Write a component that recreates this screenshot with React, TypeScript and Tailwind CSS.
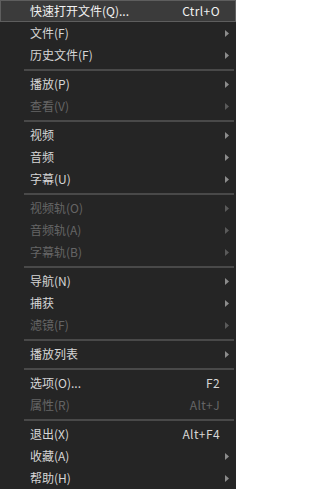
import * as React from "react";

type Item = {
  label: string;
  shortcut?: string;
  submenu?: boolean;
  disabled?: boolean;
  active?: boolean;
};

const groups: Item[][] = [
  [
    { label: "快速打开文件(Q)...", shortcut: "Ctrl+O", active: true },
    { label: "文件(F)", submenu: true },
    { label: "历史文件(F)", submenu: true },
  ],
  [
    { label: "播放(P)", submenu: true },
    { label: "查看(V)", submenu: true, disabled: true },
  ],
  [
    { label: "视频", submenu: true },
    { label: "音频", submenu: true },
    { label: "字幕(U)", submenu: true },
  ],
  [
    { label: "视频轨(O)", submenu: true, disabled: true },
    { label: "音频轨(A)", submenu: true, disabled: true },
    { label: "字幕轨(B)", submenu: true, disabled: true },
  ],
  [
    { label: "导航(N)", submenu: true },
    { label: "捕获", submenu: true },
    { label: "滤镜(F)", submenu: true, disabled: true },
  ],
  [{ label: "播放列表", submenu: true }],
  [
    { label: "选项(O)...", shortcut: "F2" },
    { label: "属性(R)", shortcut: "Alt+J", disabled: true },
  ],
  [
    { label: "退出(X)", shortcut: "Alt+F4" },
    { label: "收藏(A)", submenu: true },
    { label: "帮助(H)", submenu: true },
  ],
];

function Arrow({ disabled }: { disabled?: boolean }) {
  return (
    <svg width="4" height="7" viewBox="0 0 4 7" className="shrink-0">
      <path d="M0 0 L4 3.5 L0 7 Z" fill={disabled ? "#5a5a5a" : "#8c8c8c"} />
    </svg>
  );
}

function MenuRow({ item }: { item: Item }) {
  const color = item.disabled
    ? "text-[#656565]"
    : item.active
      ? "text-[#f2f2f2]"
      : "text-[#d6d6d6]";
  return (
    <div
      className={`flex h-[22px] items-center pl-[29px] ${
        item.active
          ? "border border-[#5e5e5e] bg-[#3b3b3b]"
          : "border border-transparent"
      } ${color}`}
    >
      <span className="flex-1 whitespace-nowrap">{item.label}</span>
      {item.shortcut ? (
        <span className="pr-[15px] whitespace-nowrap tracking-[0.4px]">
          {item.shortcut}
        </span>
      ) : null}
      {item.submenu ? (
        <span className="flex w-[14px] items-center pl-[4px]">
          <Arrow disabled={item.disabled} />
        </span>
      ) : null}
    </div>
  );
}

export default function App() {
  return (
    <div
      className="h-[489px] w-[236px] overflow-hidden bg-[#252525] text-[12px] leading-none"
      style={{ fontFamily: '"Noto Sans CJK SC", "Noto Sans", sans-serif' }}
    >
      {groups.map((g, gi) => (
        <div key={gi}>
          {gi > 0 ? (
            <div className="h-[7px] pt-[3px] pl-[24px] pr-[2px]">
              <div className="h-[2px] bg-[#494949]" />
            </div>
          ) : null}
          {g.map((item) => (
            <MenuRow key={item.label} item={item} />
          ))}
        </div>
      ))}
    </div>
  );
}
